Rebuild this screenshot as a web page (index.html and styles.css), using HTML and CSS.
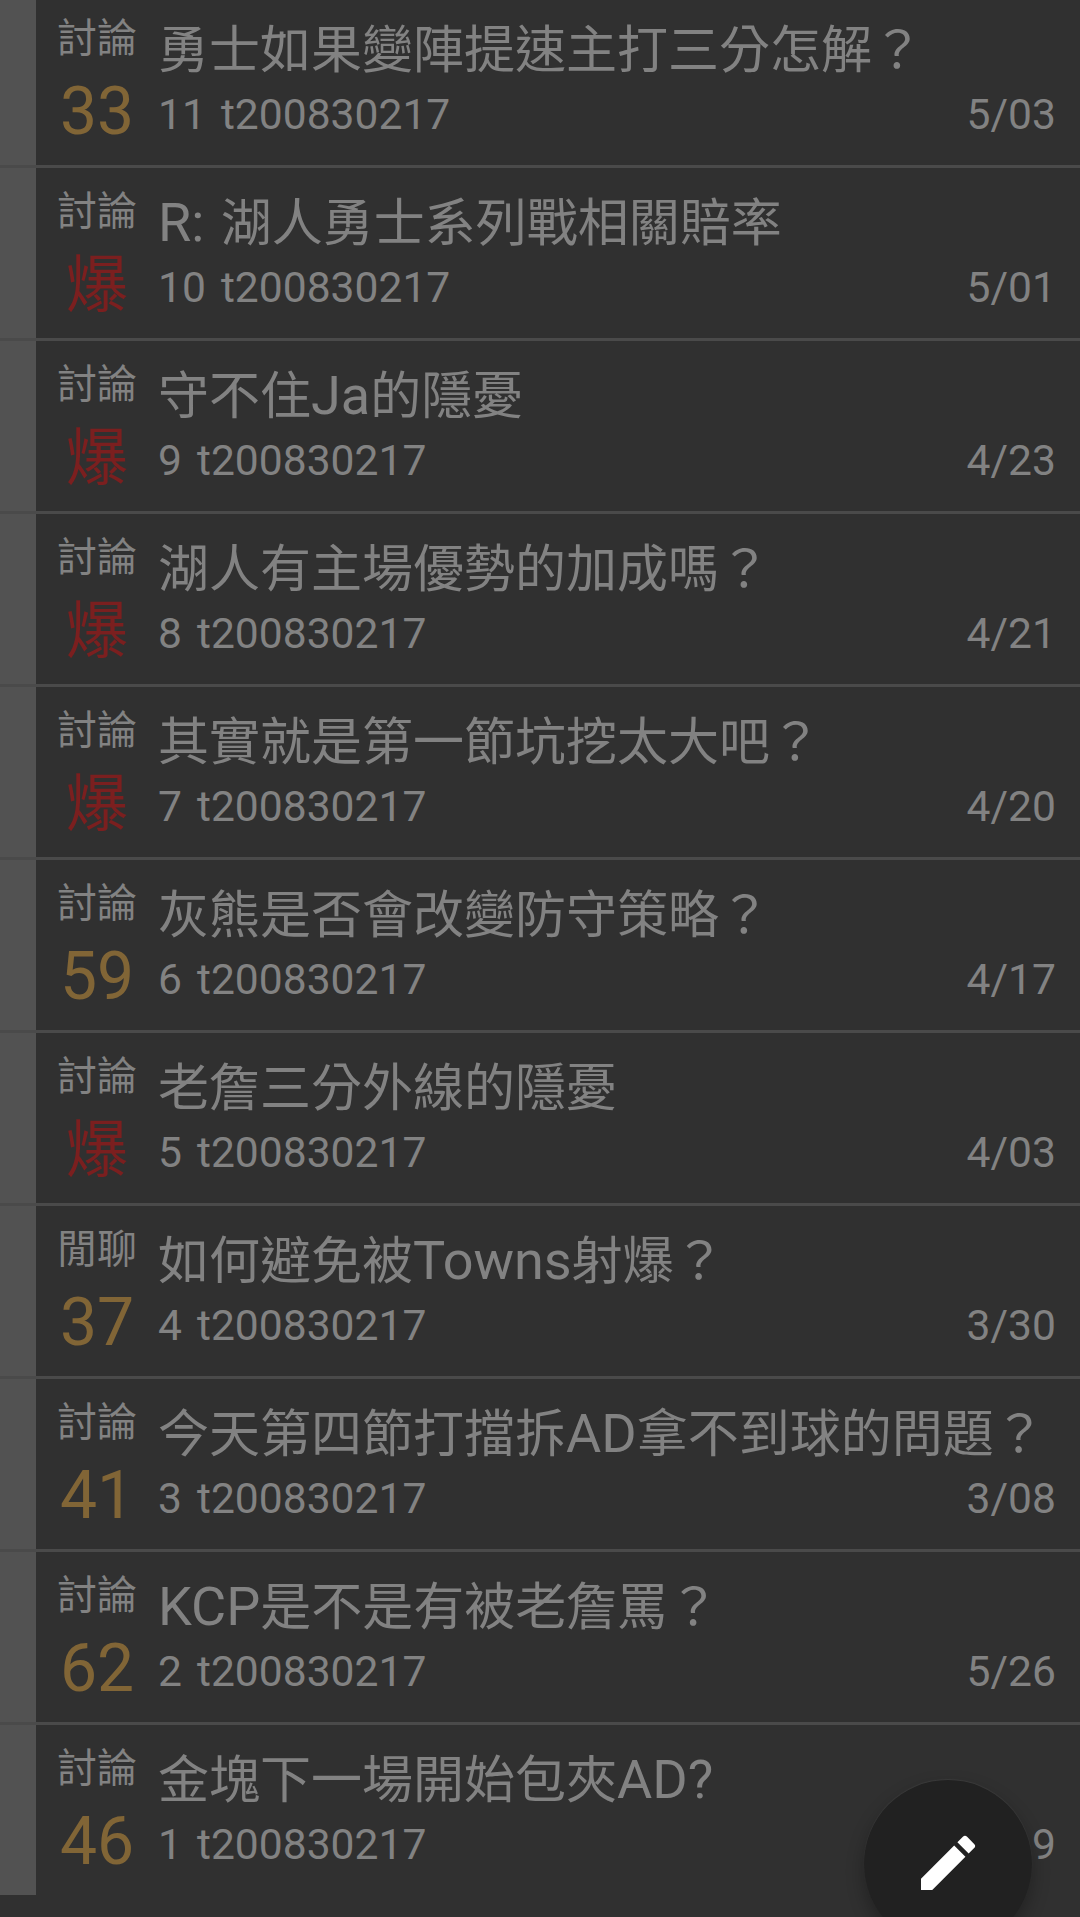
FILE: index.html
```html
<!DOCTYPE html>
<html lang="zh-Hant">
<head>
<meta charset="utf-8">
<title>文章列表</title>
<link rel="stylesheet" href="styles.css">
</head>
<body>
<main class="list">
<article class="row"><div class="badge"><span class="tag">討論</span><span class="count">33</span></div><div class="post"><h2 class="title">勇士如果變陣提速主打三分怎解？</h2><div class="meta"><span>11</span><span class="user">t200830217</span><time>5/03</time></div></div></article>
<article class="row"><div class="badge"><span class="tag">討論</span><span class="count hot">爆</span></div><div class="post"><h2 class="title"><span class="latin">R: </span>湖人勇士系列戰相關賠率</h2><div class="meta"><span>10</span><span class="user">t200830217</span><time>5/01</time></div></div></article>
<article class="row"><div class="badge"><span class="tag">討論</span><span class="count hot">爆</span></div><div class="post"><h2 class="title">守不住<span class="latin">Ja</span>的隱憂</h2><div class="meta"><span>9</span><span class="user">t200830217</span><time>4/23</time></div></div></article>
<article class="row"><div class="badge"><span class="tag">討論</span><span class="count hot">爆</span></div><div class="post"><h2 class="title">湖人有主場優勢的加成嗎？</h2><div class="meta"><span>8</span><span class="user">t200830217</span><time>4/21</time></div></div></article>
<article class="row"><div class="badge"><span class="tag">討論</span><span class="count hot">爆</span></div><div class="post"><h2 class="title">其實就是第一節坑挖太大吧？</h2><div class="meta"><span>7</span><span class="user">t200830217</span><time>4/20</time></div></div></article>
<article class="row"><div class="badge"><span class="tag">討論</span><span class="count">59</span></div><div class="post"><h2 class="title">灰熊是否會改變防守策略？</h2><div class="meta"><span>6</span><span class="user">t200830217</span><time>4/17</time></div></div></article>
<article class="row"><div class="badge"><span class="tag">討論</span><span class="count hot">爆</span></div><div class="post"><h2 class="title">老詹三分外線的隱憂</h2><div class="meta"><span>5</span><span class="user">t200830217</span><time>4/03</time></div></div></article>
<article class="row"><div class="badge"><span class="tag">閒聊</span><span class="count">37</span></div><div class="post"><h2 class="title">如何避免被<span class="latin">Towns</span>射爆？</h2><div class="meta"><span>4</span><span class="user">t200830217</span><time>3/30</time></div></div></article>
<article class="row"><div class="badge"><span class="tag">討論</span><span class="count">41</span></div><div class="post"><h2 class="title">今天第四節打擋拆<span class="latin">AD</span>拿不到球的問題？</h2><div class="meta"><span>3</span><span class="user">t200830217</span><time>3/08</time></div></div></article>
<article class="row"><div class="badge"><span class="tag">討論</span><span class="count">62</span></div><div class="post"><h2 class="title"><span class="latin">KCP</span>是不是有被老詹罵？</h2><div class="meta"><span>2</span><span class="user">t200830217</span><time>5/26</time></div></div></article>
<article class="row"><div class="badge"><span class="tag">討論</span><span class="count">46</span></div><div class="post"><h2 class="title">金塊下一場開始包夾<span class="latin">AD?</span></h2><div class="meta"><span>1</span><span class="user">t200830217</span><time>9</time></div></div></article>
</main>
<button class="compose" aria-label="發文"><svg viewBox="0 0 24 24" width="72" height="72"><path fill="#fff" d="M3 17.25V21h3.75L17.81 9.94l-3.75-3.75L3 17.25zM20.71 7.04a.996.996 0 0 0 0-1.41l-2.34-2.34a.996.996 0 0 0-1.41 0l-1.83 1.83 3.75 3.75 1.83-1.83z"/></svg></button>
</body>
</html>
```
FILE: styles.css
```css
html, body {
  height: 1917px;
  overflow: hidden;
}

body {
  margin: 0;
  background: #303030;
  color: #828282;
  font-family: Roboto, "Noto Sans CJK TC", sans-serif;
}

/* The list is scrolled a few pixels past the top of the first row. */
.list {
  margin-top: -5px;
}

.row {
  display: flex;
  box-sizing: border-box;
  height: 173px;
  border-bottom: 3px solid #4a4a4a;
}

.row:last-child {
  height: 170px;
  border-bottom: 0;
}

.row::before {
  content: "";
  flex: none;
  width: 36px;
  background: #525252;
}

.badge {
  flex: none;
  display: flex;
  flex-direction: column;
  align-items: center;
  gap: 11px;
  width: 122px;
  padding-top: 15px;
  box-sizing: border-box;
}

.tag {
  font: 40px/50px "Noto Sans CJK TC", sans-serif;
}

.count {
  color: #816536;
  font-size: 66px;
  line-height: 81px;
}

.count.hot {
  color: #7b1f1f;
  font: 62px/72px "Noto Sans CJK TC", sans-serif;
}

.post {
  flex: 1;
  padding: 16px 24px 0 0;
}

.title {
  margin: 0;
  font: 51px/70px "Noto Sans CJK TC", sans-serif;
  white-space: pre;
}

.latin {
  font: 54px/1px Roboto, sans-serif;
  word-spacing: 3px;
}

.meta {
  display: flex;
  gap: 15px;
  margin-top: 3px;
  font-size: 42.6px;
  line-height: 60px;
}

.meta time {
  margin-left: auto;
}

.compose {
  position: fixed;
  left: 864px;
  top: 1780px;
  display: grid;
  place-items: center;
  box-sizing: border-box;
  width: 168px;
  height: 168px;
  padding: 0 0 2px;
  border: 0;
  border-radius: 50%;
  background: #212121;
  box-shadow: 0 -1px 1px #3a3a3a, 0 8px 18px rgba(0, 0, 0, .3);
}
```
